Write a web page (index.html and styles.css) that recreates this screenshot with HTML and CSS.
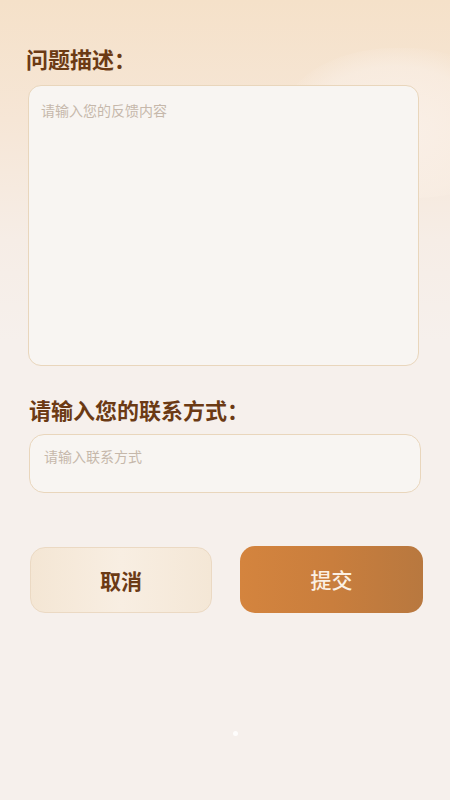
FILE: index.html
```html
<!DOCTYPE html>
<html lang="zh-CN">
<head>
<meta charset="utf-8">
<title>意见反馈</title>
<link rel="stylesheet" href="styles.css">
</head>
<body>
<div class="page">
  <div class="glow"></div>
  <main class="form">
    <h2 class="label label-first">问题描述：</h2>
    <div class="field area"><span class="ph">请输入您的反馈内容</span></div>
    <h2 class="label label-second">请输入您的联系方式：</h2>
    <div class="field line"><span class="ph">请输入联系方式</span></div>
    <div class="actions">
      <button class="btn cancel">取消</button>
      <button class="btn submit">提交</button>
    </div>
    <div class="dots"><span class="dot"></span></div>
  </main>
</div>
</body>
</html>
```
FILE: styles.css
```css
html, body {
  margin: 0;
  padding: 0;
}
body {
  width: 450px;
  height: 800px;
  overflow: hidden;
  font-family: "Noto Sans CJK SC", "Noto Sans", sans-serif;
  background: #f6f0ec;
}
.page {
  position: relative;
  width: 450px;
  height: 800px;
  background:
    linear-gradient(180deg, #f5e1c9 0px, #f6e6d6 120px, #f6ede6 240px, #f6f0ec 340px, #f6f0ec 800px);
  overflow: hidden;
}
.glow {
  position: absolute;
  right: -60px;
  top: 48px;
  width: 230px;
  height: 150px;
  border-radius: 50% 45% 40% 50%;
  background: radial-gradient(ellipse at 50% 55%, rgba(250,240,232,0.95) 0%, rgba(249,238,228,0.7) 55%, rgba(249,238,228,0) 75%);
}
.form {
  position: relative;
  display: flex;
  flex-direction: column;
  padding: 43px 0 0 28px;
}
.label {
  margin: 0;
  font-size: 22px;
  line-height: 30px;
  font-weight: 700;
  color: #6b3a14;
}
.label-first {
  margin-left: -2px;
}
.label-second {
  margin-top: 28px;
  margin-left: 1px;
}
.field {
  box-sizing: border-box;
  background: #f8f5f2;
  border: 1.5px solid #e9d6bc;
  border-radius: 13px;
}
.area {
  margin-top: 12px;
  height: 281px;
  width: 391px;
  padding: 11px 12px;
}
.line {
  margin-top: 10px;
  margin-left: 1px;
  height: 59px;
  width: 392px;
  padding: 8px 14px;
  border-radius: 15px;
}
.ph {
  font-size: 14px;
  line-height: 22px;
  color: #c6b8ab;
}
.actions {
  display: flex;
  gap: 28px;
  margin-top: 52px;
  margin-left: 2px;
  align-items: center;
}
.btn {
  box-sizing: border-box;
  flex: none;
  width: 182px;
  border-radius: 15px;
  font-family: "Noto Sans CJK SC", "Noto Sans", sans-serif;
  font-size: 21px;
  font-weight: 500;
  cursor: pointer;
}
.cancel {
  height: 66px;
  margin-top: 2px;
  background: linear-gradient(90deg, #f4e6d4 0%, #f8eee2 50%, #f4e7d6 100%);
  border: 1.5px solid #ebd9c3;
  color: #6b3a14;
  font-weight: 700;
}
.submit {
  height: 67px;
  width: 183px;
  background: linear-gradient(90deg, #d4843e 0%, #c97e3d 50%, #b8783f 100%);
  border: none;
  color: #fbf0e4;
}
.dots {
  display: flex;
  margin-top: 118px;
  padding-left: 205px;
}
.dot {
  width: 5px;
  height: 5px;
  border-radius: 50%;
  background: #ffffff;
  opacity: 0.85;
}
```
